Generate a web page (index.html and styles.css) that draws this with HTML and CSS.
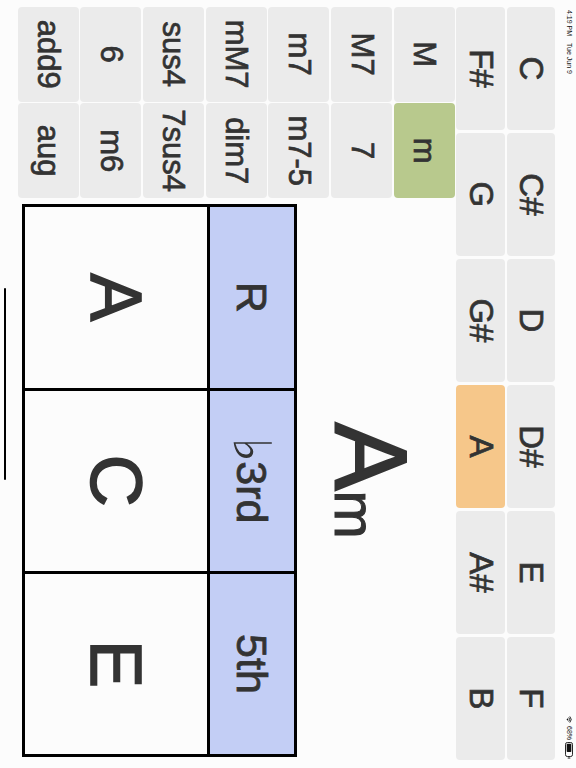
FILE: index.html
```html
<!DOCTYPE html>
<html>
<head>
<meta charset="utf-8">
<link rel="stylesheet" href="styles.css">
</head>
<body>
<div class="screen">
  <div class="status">
    <span class="time">4:19 PM</span><span class="date">Tue Jun 9</span>
    <span class="spacer"></span>
    <svg class="wifi" width="7" height="6" viewBox="0 0 14 11"><path d="M7 10.5 L4.6 7.9 A3.4 3.4 0 0 1 9.4 7.9 Z" fill="#111"/><path d="M2.9 6.1 A5.8 5.8 0 0 1 11.1 6.1" stroke="#111" stroke-width="1.8" fill="none"/><path d="M0.9 3.9 A8.8 8.8 0 0 1 13.1 3.9" stroke="#111" stroke-width="1.8" fill="none"/></svg>
    <span class="pct">68%</span>
    <svg class="batt" width="17" height="8" viewBox="0 0 17 8"><rect x="0.5" y="0.5" width="14" height="7" rx="1.8" fill="none" stroke="#111" stroke-width="0.9"/><rect x="1.7" y="1.7" width="8.4" height="4.6" rx="0.8" fill="#111"/><rect x="15.4" y="2.6" width="1.2" height="2.8" rx="0.5" fill="#111"/></svg>
  </div>
  <div class="roots">
    <div class="btn">C</div><div class="btn">C#</div><div class="btn">D</div><div class="btn">D#</div><div class="btn">E</div><div class="btn">F</div>
    <div class="btn">F#</div><div class="btn">G</div><div class="btn">G#</div><div class="btn sel-root">A</div><div class="btn">A#</div><div class="btn">B</div>
  </div>
  <div class="lower">
    <div class="types">
      <div class="btn">M</div><div class="btn sel-type">m</div>
      <div class="btn">M7</div><div class="btn">7</div>
      <div class="btn">m7</div><div class="btn">m7-5</div>
      <div class="btn">mM7</div><div class="btn">dim7</div>
      <div class="btn">sus4</div><div class="btn">7sus4</div>
      <div class="btn">6</div><div class="btn">m6</div>
      <div class="btn">add9</div><div class="btn">aug</div>
    </div>
    <div class="panel">
      <div class="chord">A<span class="q">m</span></div>
      <div class="notes">
        <div class="cell iv">R</div>
        <div class="cell iv"><span class="flat">♭</span>3rd</div>
        <div class="cell iv">5th</div>
        <div class="cell nt">A</div>
        <div class="cell nt">C</div>
        <div class="cell nt">E</div>
      </div>
    </div>
  </div>
  <div class="home"></div>
</div>
</body>
</html>
```
FILE: styles.css
```css
html, body {
  margin: 0;
  padding: 0;
  background: #fcfcfc;
  overflow: hidden;
}
body {
  width: 576px;
  height: 768px;
}
.screen {
  position: relative;
  width: 768px;
  height: 576px;
  transform-origin: 0 0;
  transform: translateX(576px) rotate(90deg);
  background: #fcfcfc;
  font-family: "Liberation Sans", Arial, sans-serif;
  color: #333;
}
.status {
  height: 20.7px;
  box-sizing: border-box;
  display: flex;
  align-items: flex-start;
  padding: 3px 9px 0 10px;
  font-size: 7px;
  line-height: 8px;
  color: #111;
}
.time { margin-right: 7px; }
.spacer { flex: 1; }
.wifi { margin-top: 1px; margin-right: 3px; }
.pct { margin-right: 2px; }
.btn {
  background: #ebebeb;
  border-radius: 4px;
  display: flex;
  align-items: center;
  justify-content: center;
  -webkit-text-stroke: 0.7px #333;
}
.roots {
  display: grid;
  grid-template-columns: repeat(6, 1fr);
  grid-auto-rows: 48.6px;
  column-gap: 2.5px;
  row-gap: 1.7px;
  margin-left: 6.7px;
  width: 753.5px;
  font-size: 33px;
}
.lower {
  display: flex;
  margin-top: 1.7px;
  margin-left: 6.7px;
}
.types {
  width: 191.5px;
  display: grid;
  grid-template-columns: 1fr 1fr;
  column-gap: 1.7px;
  row-gap: 1.7px;
  grid-auto-rows: 61px;
  font-size: 31px;
}
.sel-root { background: #f6c78a; }
.sel-type { background: #b8c98d; }
.panel {
  margin-left: 6px;
  width: 553px;
}
.chord {
  height: 158px;
  box-sizing: border-box;
  padding-top: 34px;
  font-size: 102px;
  line-height: 102px;
  text-align: center;
  -webkit-text-stroke: 2px #333;
}
.chord .q {
  font-size: 58px;
  -webkit-text-stroke: 1px #333;
}
.notes {
  display: grid;
  grid-template-columns: repeat(3, 1fr);
  grid-template-rows: 84px 182px;
  gap: 3px;
  padding: 3px;
  background: #000;
}
.cell {
  display: flex;
  align-items: center;
  justify-content: center;
}
.iv {
  background: #c3cef5;
  font-size: 43px;
  -webkit-text-stroke: 0.8px #333;
}
.nt {
  background: #fcfcfc;
  font-size: 72px;
  -webkit-text-stroke: 1.6px #333;
}
.flat {
  font-family: "DejaVu Sans", sans-serif;
  font-size: 52px;
  line-height: 1;
  margin-right: -1px;
  -webkit-text-stroke: 0;
}
.home {
  position: absolute;
  left: 288px;
  top: 569.5px;
  width: 192px;
  height: 2px;
  background: #000;
  border-radius: 1px;
}
```
